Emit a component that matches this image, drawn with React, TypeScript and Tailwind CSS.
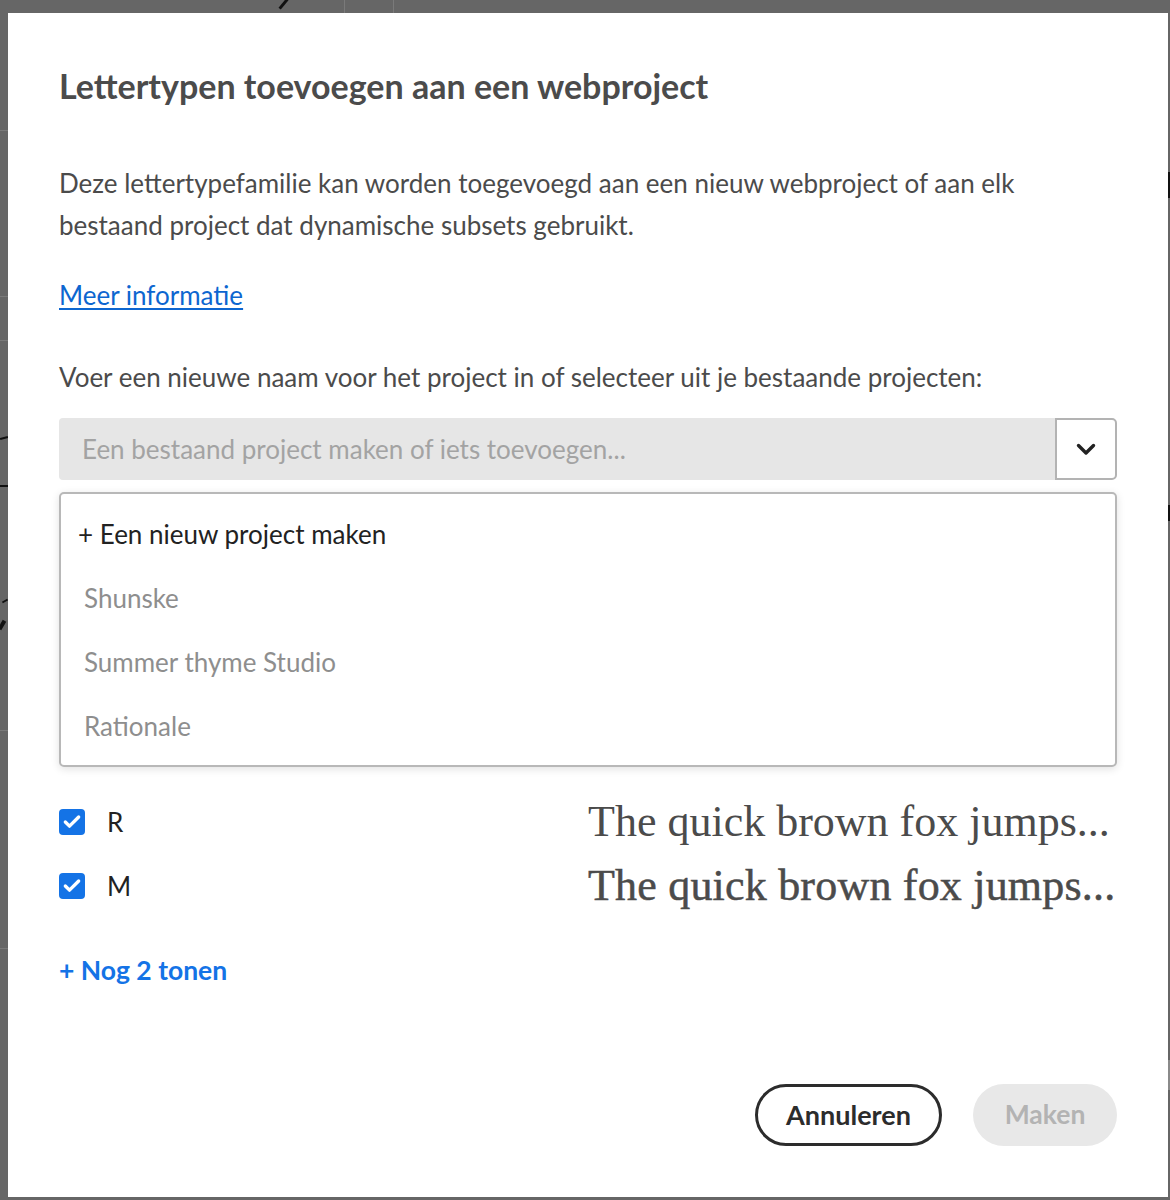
import { Check } from 'lucide-react'

const PROJECTS = ['Shunske', 'Summer thyme Studio', 'Rationale']

const WEIGHTS = [
    { label: 'R', extra: '' },
    { label: 'M', extra: 'tracking-[0.2px] [-webkit-text-stroke:0.5px_#4b4b4b]' },
]

function Backdrop() {
    return (
        <>
            {/* bits of the page behind the dialog */}
            <div className="absolute left-[282px] top-[-2px] w-[3px] h-[12px] bg-[#111] rotate-[40deg]" />
            <div className="absolute left-[344px] top-0 w-px h-[13px] bg-[#7a7a7a]" />
            <div className="absolute left-[393px] top-0 w-px h-[13px] bg-[#7a7a7a]" />
            <div className="absolute left-0 top-[130px] w-[8px] h-px bg-[#7a7a7a]" />
            <div className="absolute left-0 top-[296px] w-[8px] h-px bg-[#7a7a7a]" />
            <div className="absolute left-0 top-[340px] w-[8px] h-px bg-[#7a7a7a]" />
            <div className="absolute left-0 top-[730px] w-[8px] h-px bg-[#7a7a7a]" />
            <div className="absolute left-0 top-[948px] w-[8px] h-px bg-[#7a7a7a]" />
            <div className="absolute left-0 top-[437px] w-[8px] h-[2px] bg-[#111] rotate-[-15deg]" />
            <div className="absolute left-0 top-[485px] w-[8px] h-[2px] bg-[#111]" />
            <div className="absolute left-[2px] top-[600px] w-[6px] h-[2px] bg-[#111] rotate-[-30deg]" />
            <div className="absolute left-0 top-[620px] w-[4px] h-[10px] bg-[#111] rotate-[30deg]" />
            <div className="absolute right-0 top-[172px] w-[2px] h-[26px] bg-[#111]" />
            <div className="absolute right-0 top-[505px] w-[2px] h-[16px] bg-[#111]" />
            <div className="absolute right-0 top-[1060px] w-[2px] h-[30px] bg-[#8a8a8a]" />
        </>
    )
}

export default function App() {
    return (
        <div className="relative w-[1170px] h-[1200px] bg-[#666666] overflow-hidden pt-[13px] pl-[8px] font-['Lato',sans-serif]">
            <Backdrop />

            <div className="relative flex flex-col w-[1160px] h-[1184px] bg-white px-[51px] pt-[53px] pb-[51px] text-[#4b4b4b]">
                {/* Title */}
                <h1 className="text-[34px] leading-[40px] font-bold text-[#4b4b4b] whitespace-nowrap">
                    Lettertypen toevoegen aan een webproject
                </h1>

                {/* Intro */}
                <p className="mt-[56px] text-[26px] leading-[42px] whitespace-nowrap">
                    Deze lettertypefamilie kan worden toegevoegd aan een nieuw webproject of aan elk
                    <br />
                    bestaand project dat dynamische subsets gebruikt.
                </p>

                <a href="#" className="mt-[28px] self-start text-[26px] leading-[42px] text-[#0d66d0] underline underline-offset-[3px]">
                    Meer informatie
                </a>

                <p className="mt-[40px] text-[26px] leading-[42px] whitespace-nowrap">
                    Voer een nieuwe naam voor het project in of selecteer uit je bestaande projecten:
                </p>

                {/* Combobox */}
                <div className="mt-[20px] flex h-[62px]">
                    <div className="flex-1 flex items-center pl-[23px] bg-[#e6e6e6] rounded-l-[4px] text-[26px] text-[#a3a3a3]">
                        Een bestaand project maken of iets toevoegen...
                    </div>
                    <button className="w-[62px] flex items-center justify-center bg-white border-2 border-[#b3b3b3] rounded-r-[5px]">
                        <svg width="20" height="13" viewBox="0 0 20 13" fill="none">
                            <polyline points="2.5,2.5 10,10 17.5,2.5" stroke="#222" strokeWidth="3.4" strokeLinecap="round" strokeLinejoin="round" />
                        </svg>
                    </button>
                </div>

                {/* Menu */}
                <ul className="mt-[12px] pt-[8px] pb-[7px] border-2 border-[#b8b8b8] rounded-[5px] shadow-[0_2px_8px_rgba(0,0,0,0.12)] bg-white">
                    <li className="h-[64px] flex items-center pl-[17px] text-[26px] text-[#222]">
                        + Een nieuw project maken
                    </li>
                    {PROJECTS.map((p) => (
                        <li key={p} className="h-[64px] flex items-center pl-[23px] text-[26px] text-[#8e8e8e]">
                            {p}
                        </li>
                    ))}
                </ul>

                {/* Weights */}
                <div className="mt-[23px]">
                    {WEIGHTS.map((w) => (
                        <div key={w.label} className="h-[64px] grid grid-cols-[529px_1fr] items-center">
                            <div className="flex items-center">
                                <span className="w-[26px] h-[26px] rounded-[4px] bg-[#1473e6] flex items-center justify-center">
                                    <Check size={20} strokeWidth={4} className="text-white" />
                                </span>
                                <span className="ml-[22px] text-[26px] text-[#222]">{w.label}</span>
                            </div>
                            <span className={`font-['Liberation_Serif',serif] text-[44px] leading-[64px] text-[#4b4b4b] whitespace-nowrap ${w.extra}`}>
                                The quick brown fox jumps...
                            </span>
                        </div>
                    ))}
                </div>

                <button className="mt-[32px] self-start text-[26.5px] leading-[40px] font-bold text-[#1473e6]">
                    + Nog 2 tonen
                </button>

                {/* Footer */}
                <div className="mt-auto flex justify-end gap-[31px]">
                    <button className="h-[62px] w-[187px] rounded-full border-[3px] border-[#2c2c2c] text-[27px] font-bold text-[#2c2c2c]">
                        Annuleren
                    </button>
                    <button className="h-[62px] w-[144px] rounded-full bg-[#e8e8e8] text-[26.5px] font-bold text-[#b3b3b3]">
                        Maken
                    </button>
                </div>
            </div>
        </div>
    )
}
